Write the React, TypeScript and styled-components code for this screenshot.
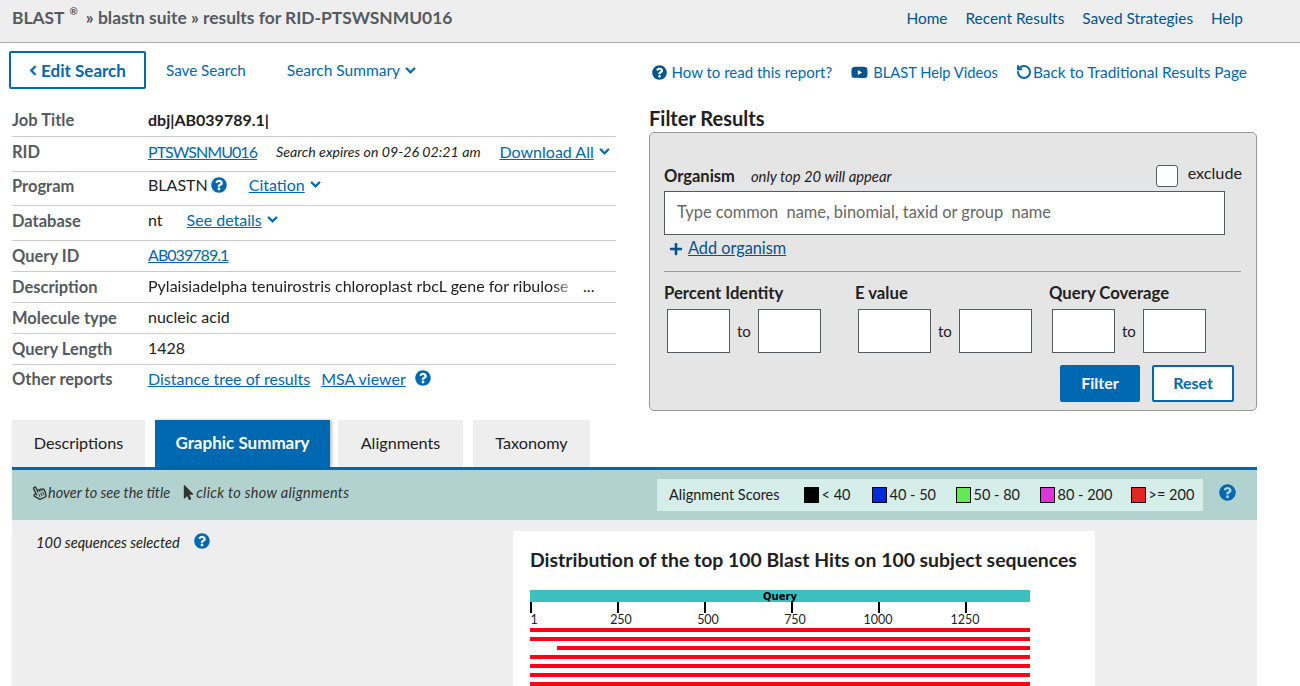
import { FunctionComponent, ReactNode } from "react";
import styled, { createGlobalStyle } from "styled-components";
import {
  FaChevronDown,
  FaChevronLeft,
  FaMousePointer,
  FaPlus,
  FaQuestionCircle,
  FaRegHandPointer,
  FaYoutube,
} from "react-icons/fa";
import { RotateCcw } from "lucide-react";

const BLUE = "#0067b1";
const DARK_BLUE = "#00548f";

const GlobalStyle = createGlobalStyle`
  html, body {
    margin: 0;
    padding: 0;
    background: #fff;
    color: #212121;
    font-family: "Lato", "Open Sans", sans-serif;
    font-size: 16px;
  }
  * { box-sizing: border-box; }
`;

const Page = styled.div`
  width: 1300px;
  height: 686px;
  overflow: hidden;
`;

const TopBar = styled.header`
  height: 43px;
  background: #eee;
  border-bottom: 1px solid #aaa;
  display: flex;
  align-items: center;
  justify-content: space-between;
  padding: 0 57px 7px 12px;
`;

const Crumbs = styled.div`
  font-size: 17.4px;
  font-weight: 700;
  color: #555a60;
  sup {
    font-size: 10px;
    margin: 0 8px 0 5px;
    position: relative;
    top: -2px;
    vertical-align: super;
    line-height: 0;
  }
`;

const TopNav = styled.nav`
  display: flex;
  gap: 18px;
  a {
    color: ${DARK_BLUE};
    font-size: 15.4px;
  }
`;

const ActionRow = styled.div`
  display: flex;
  align-items: center;
  justify-content: space-between;
  padding: 8px 53px 0 9px;
  height: 46px;
`;

const ActionGroup = styled.div`
  display: flex;
  align-items: center;
`;

const HelpActions = styled(ActionGroup)`
  margin-top: 4px;
`;

const EditButton = styled.a`
  width: 137px;
  height: 38px;
  border: 2px solid ${BLUE};
  border-radius: 2px;
  color: ${BLUE};
  font-weight: 700;
  font-size: 17px;
  display: flex;
  align-items: center;
  justify-content: center;
  gap: 4px;
  svg {
    width: 8px;
    height: 11px;
    stroke: currentColor;
    stroke-width: 30px;
  }
`;

const ActionLink = styled.a<{ $left: number; $size?: number; $gap?: number }>`
  color: ${BLUE};
  font-size: ${(p) => p.$size ?? 15}px;
  margin-left: ${(p) => p.$left}px;
  display: inline-flex;
  align-items: center;
  gap: ${(p) => p.$gap ?? 5}px;
  white-space: nowrap;
  svg {
    flex: none;
  }
`;

const Chevron = styled(FaChevronDown)`
  width: 11px;
  height: 11px;
  color: ${BLUE};
  margin-left: 5px;
  flex: none;
  stroke: currentColor;
  stroke-width: 30px;
`;

const Columns = styled.div`
  display: flex;
  padding-left: 12px;
`;

const Summary = styled.div`
  width: 604px;
  margin-top: 15px;
`;

const Row = styled.div<{ $height: number; $lift: number }>`
  height: ${(p) => p.$height}px;
  padding-bottom: ${(p) => p.$lift}px;
  display: grid;
  grid-template-columns: 136px 1fr;
  align-items: center;
  border-bottom: 1px solid #ccc;
  &:last-child {
    border-bottom: none;
  }
`;

const RowLabel = styled.div`
  font-weight: 700;
  color: #555a60;
  font-size: 16.5px;
  white-space: nowrap;
`;

const RowValue = styled.div<{ $bold?: boolean }>`
  display: flex;
  align-items: center;
  margin-top: -2px;
  font-size: 16px;
  white-space: nowrap;
  font-weight: ${(p) => (p.$bold ? 700 : 400)};
`;

const TextLink = styled.a<{ $left?: number }>`
  color: ${BLUE};
  text-decoration: underline;
  margin-left: ${(p) => p.$left ?? 0}px;
`;

const CodeLink = styled(TextLink)`
  letter-spacing: -0.95px;
`;

const Expires = styled.span`
  font-style: italic;
  font-size: 14.2px;
  margin-left: 19px;
`;

const Help = styled(FaQuestionCircle)<{ $left?: number }>`
  width: 16px;
  height: 16px;
  color: ${BLUE};
  margin-left: ${(p) => p.$left ?? 0}px;
  flex: none;
`;

const Faded = styled.span`
  display: inline-block;
  width: 431px;
  overflow: hidden;
  -webkit-mask-image: linear-gradient(to right, #000 94%, transparent 100%);
  mask-image: linear-gradient(to right, #000 94%, transparent 100%);
`;

const FilterColumn = styled.div`
  width: 608px;
  margin-left: 33px;
`;

const FilterTitle = styled.h2`
  margin: 17px 0 2px;
  font-size: 20px;
  line-height: 24px;
  font-weight: 700;
`;

const FilterPanel = styled.div`
  height: 279px;
  background: #e5e5e5;
  border: 1px solid #999;
  border-radius: 5px;
  padding: 28px 14px 0;
`;

const OrganismHead = styled.div`
  display: flex;
  align-items: center;
  height: 30px;
  b {
    font-weight: 700;
    font-size: 16.5px;
  }
  em {
    margin: -1px 0 0 16px;
    font-size: 14.8px;
  }
`;

const Checkbox = styled.span`
  width: 22px;
  height: 22px;
  margin: 0 10px 0 auto;
  background: #fff;
  border: 1px solid #555a60;
  border-radius: 3px;
`;

const ExcludeLabel = styled.span`
  font-size: 16.2px;
  margin-top: -8px;
`;

const OrganismInput = styled.div`
  width: 561px;
  height: 44px;
  background: #fff;
  border: 1px solid #555a60;
  padding: 0 0 3px 12px;
  display: flex;
  align-items: center;
  color: #666;
  font-size: 16.4px;
  white-space: pre;
`;

const AddOrganism = styled.div`
  display: flex;
  align-items: center;
  gap: 5px;
  height: 27px;
  margin: 0 0 9px 5px;
  color: ${DARK_BLUE};
  a {
    text-decoration: underline;
    font-size: 16.3px;
    margin-top: -2px;
  }
  svg {
    width: 14px;
    height: 14px;
  }
`;

const Divider = styled.hr`
  margin: 0;
  border: none;
  border-top: 1px solid #999;
  width: 577px;
`;

const RangeGroups = styled.div`
  display: flex;
  margin-top: 11px;
`;

const RangeGroup = styled.div<{ $width: number }>`
  width: ${(p) => p.$width}px;
  font-weight: 700;
  font-size: 16.7px;
  line-height: 20px;
  white-space: nowrap;
`;

const RangeInputs = styled.div`
  display: flex;
  align-items: center;
  gap: 7px;
  margin: 6px 0 0 3px;
  font-weight: 400;
  font-size: 15px;
`;

const RangeBox = styled.span<{ $width: number }>`
  width: ${(p) => p.$width}px;
  height: 44px;
  background: #fff;
  border: 1px solid #555a60;
`;

const ButtonRow = styled.div`
  display: flex;
  justify-content: flex-end;
  gap: 12px;
  margin: 12px 8px 0 0;
`;

const PanelButton = styled.a<{ $primary?: boolean }>`
  height: 37px;
  width: ${(p) => (p.$primary ? 80 : 82)}px;
  display: flex;
  align-items: center;
  justify-content: center;
  border: 2px solid ${BLUE};
  border-radius: 2px;
  padding-bottom: 2px;
  font-weight: 700;
  font-size: 16px;
  background: ${(p) => (p.$primary ? BLUE : "#fff")};
  color: ${(p) => (p.$primary ? "#fff" : BLUE)};
`;

const Tabs = styled.div`
  display: flex;
  margin: 9px 43px 0 12px;
  height: 50px;
  border-bottom: 3px solid ${BLUE};
`;

const Tab = styled.a<{ $width: number; $gap: number; $active?: boolean }>`
  width: ${(p) => p.$width}px;
  margin-right: ${(p) => p.$gap}px;
  padding-bottom: 2px;
  display: flex;
  align-items: center;
  justify-content: center;
  font-size: ${(p) => (p.$active ? 17 : 16.2)}px;
  background: ${(p) => (p.$active ? BLUE : "#eee")};
  color: ${(p) => (p.$active ? "#fff" : "#212121")};
  font-weight: ${(p) => (p.$active ? 700 : 400)};
  box-shadow: ${(p) => (p.$active ? "2px 0 3px rgba(0,0,0,.25)" : "none")};
`;

const TipBar = styled.div`
  margin: 0 43px 0 12px;
  height: 50px;
  background: #b1d2cf;
  display: flex;
  align-items: center;
  padding: 0 0 0 20px;
  font-size: 14.5px;
  font-style: italic;
  color: #333;
`;

const Tip = styled.span<{ $left?: number; $spread?: number }>`
  display: inline-flex;
  align-items: center;
  gap: 2px;
  margin: -5px 0 0 ${(p) => p.$left ?? 0}px;
  letter-spacing: ${(p) => p.$spread ?? 0}px;
  white-space: nowrap;
`;

const HandIcon = styled(FaRegHandPointer)`
  width: 14px;
  height: 15px;
  transform: rotate(-25deg);
`;

const PointerIcon = styled(FaMousePointer)`
  width: 11px;
  height: 15px;
`;

const Legend = styled.div`
  margin-left: auto;
  width: 546px;
  height: 32px;
  background: #d5eee9;
  display: flex;
  align-items: center;
  padding: 0 0 1px 12px;
  font-style: normal;
  font-size: 14.5px;
  color: #212121;
  white-space: nowrap;
`;

const LegendItem = styled.span<{ $width: number; $left?: number }>`
  width: ${(p) => p.$width}px;
  display: flex;
  align-items: center;
  gap: 3px;
  margin-left: ${(p) => p.$left ?? 0}px;
  white-space: nowrap;
`;

const Swatch = styled.i<{ $color: string }>`
  width: 15px;
  height: 16px;
  border: 1px solid #000;
  background: ${(p) => p.$color};
  flex: none;
`;

const TipHelp = styled(Help)`
  width: 17px;
  height: 17px;
  margin: -5px 21px 0 16px;
`;

const Body = styled.div`
  margin: 0 43px 0 12px;
  height: 166px;
  background: #eee;
  display: flex;
  padding: 12px 0 0 24px;
`;

const Selected = styled.div`
  width: 477px;
  display: flex;
  align-items: flex-start;
  font-style: italic;
  font-size: 14.6px;
  line-height: 22px;
  svg {
    margin-top: 1px;
  }
`;

const ChartCard = styled.div`
  width: 582px;
  margin-top: -1px;
  background: #fff;
  padding: 16px 17px;
`;

const ChartTitle = styled.h3`
  margin: 0 0 18px;
  font-size: 19.4px;
  line-height: 25px;
  font-weight: 700;
  white-space: nowrap;
`;

const QueryBar = styled.div`
  width: 500px;
  height: 12px;
  background: #3dbfbf;
  color: #000;
  text-align: center;
  font-family: "DejaVu Sans", sans-serif;
  font-weight: 700;
  font-size: 10px;
  line-height: 13px;
`;

const Scale = styled.div`
  width: 500px;
  height: 26px;
  display: flex;
`;

const Tick = styled.div`
  width: 87px;
  flex: none;
  border-left: 2px solid #000;
  height: 10px;
  font-size: 12.5px;
  line-height: 14px;
  padding: 11px 0 0 2px;
  color: #222;
  white-space: nowrap;
`;

const TickLabel = styled.span<{ $nudge: number }>`
  display: inline-block;
  margin-left: ${(p) => p.$nudge}px;
  transform: translateX(-50%);
`;

const Hits = styled.div`
  width: 500px;
  display: flex;
  flex-direction: column;
  gap: 5px;
`;

const Hit = styled.div<{ $indent: number }>`
  height: 4px;
  background: #ff0018;
  margin-left: ${(p) => p.$indent}px;
`;

const infoRows: { label: string; height: number; lift: number; value: ReactNode; bold?: boolean }[] = [
  { label: "Job Title", height: 33, lift: 0, value: "dbj|AB039789.1|", bold: true },
  {
    label: "RID",
    height: 35,
    lift: 4,
    value: (
      <>
        <CodeLink>PTSWSNMU016</CodeLink>
        <Expires>Search expires on 09-26 02:21 am</Expires>
        <TextLink $left={19}>Download All</TextLink>
        <Chevron />
      </>
    ),
  },
  {
    label: "Program",
    height: 34,
    lift: 6,
    value: (
      <>
        BLASTN
        <Help $left={3} />
        <TextLink $left={22}>Citation</TextLink>
        <Chevron />
      </>
    ),
  },
  {
    label: "Database",
    height: 35,
    lift: 5,
    value: (
      <>
        nt
        <TextLink $left={24}>See details</TextLink>
        <Chevron />
      </>
    ),
  },
  { label: "Query ID", height: 31, lift: 1, value: <CodeLink>AB039789.1</CodeLink> },
  {
    label: "Description",
    height: 31,
    lift: 1,
    value: (
      <>
        <Faded>Pylaisiadelpha tenuirostris chloroplast rbcL gene for ribulose</Faded>
        <span>&nbsp;...</span>
      </>
    ),
  },
  { label: "Molecule type", height: 31, lift: 1, value: "nucleic acid" },
  { label: "Query Length", height: 31, lift: 1, value: "1428" },
  {
    label: "Other reports",
    height: 30,
    lift: 2,
    value: (
      <>
        <TextLink>Distance tree of results</TextLink>
        <TextLink $left={11}>MSA viewer</TextLink>
        <Help $left={9} />
      </>
    ),
  },
];

const ranges = [
  { label: "Percent Identity", groupWidth: 191, boxWidth: 63 },
  { label: "E value", groupWidth: 194, boxWidth: 73 },
  { label: "Query Coverage", groupWidth: 190, boxWidth: 63 },
];

const tabs = [
  { label: "Descriptions", width: 133, gap: 10 },
  { label: "Graphic Summary", width: 175, gap: 8, active: true },
  { label: "Alignments", width: 125, gap: 10 },
  { label: "Taxonomy", width: 117, gap: 0 },
];

const scores = [
  { label: "< 40", color: "#000000", width: 68, left: 24 },
  { label: "40 - 50", color: "#0029d9", width: 84 },
  { label: "50 - 80", color: "#66e854", width: 84 },
  { label: "80 - 200", color: "#dc35dc", width: 91 },
  { label: ">= 200", color: "#e22626", width: 70 },
];

const ticks = ["1", "250", "500", "750", "1000", "1250"];
const hitIndents = [0, 0, 27, 0, 0, 0, 0];

const App: FunctionComponent = () => {
  return (
    <Page>
      <GlobalStyle />
      <TopBar>
        <Crumbs>
          BLAST<sup>®</sup>» blastn suite » results for RID-PTSWSNMU016
        </Crumbs>
        <TopNav>
          <a>Home</a>
          <a>Recent Results</a>
          <a>Saved Strategies</a>
          <a>Help</a>
        </TopNav>
      </TopBar>
      <ActionRow>
        <ActionGroup>
          <EditButton>
            <FaChevronLeft />
            Edit Search
          </EditButton>
          <ActionLink $left={20} $size={15.2}>
            Save Search
          </ActionLink>
          <ActionLink $left={41} $size={15.5} $gap={0}>
            Search Summary
            <Chevron />
          </ActionLink>
        </ActionGroup>
        <HelpActions>
          <ActionLink $left={0}>
            <FaQuestionCircle size={15} color={DARK_BLUE} />
            How to read this report?
          </ActionLink>
          <ActionLink $left={19} $size={14.7}>
            <FaYoutube size={17} color={DARK_BLUE} />
            BLAST Help Videos
          </ActionLink>
          <ActionLink $left={18} $size={15.4} $gap={1}>
            <RotateCcw size={16} strokeWidth={3} />
            Back to Traditional Results Page
          </ActionLink>
        </HelpActions>
      </ActionRow>
      <Columns>
        <Summary>
          {infoRows.map((row) => (
            <Row $height={row.height} $lift={row.lift} key={row.label}>
              <RowLabel>{row.label}</RowLabel>
              <RowValue $bold={row.bold}>{row.value}</RowValue>
            </Row>
          ))}
        </Summary>
        <FilterColumn>
          <FilterTitle>Filter Results</FilterTitle>
          <FilterPanel>
            <OrganismHead>
              <b>Organism</b>
              <em>only top 20 will appear</em>
              <Checkbox />
              <ExcludeLabel>exclude</ExcludeLabel>
            </OrganismHead>
            <OrganismInput>Type common  name, binomial, taxid or group  name</OrganismInput>
            <AddOrganism>
              <FaPlus />
              <a>Add organism</a>
            </AddOrganism>
            <Divider />
            <RangeGroups>
              {ranges.map((range) => (
                <RangeGroup $width={range.groupWidth} key={range.label}>
                  {range.label}
                  <RangeInputs>
                    <RangeBox $width={range.boxWidth} />
                    to
                    <RangeBox $width={range.boxWidth} />
                  </RangeInputs>
                </RangeGroup>
              ))}
            </RangeGroups>
            <ButtonRow>
              <PanelButton $primary>Filter</PanelButton>
              <PanelButton>Reset</PanelButton>
            </ButtonRow>
          </FilterPanel>
        </FilterColumn>
      </Columns>
      <Tabs>
        {tabs.map((tab) => (
          <Tab $width={tab.width} $gap={tab.gap} $active={tab.active} key={tab.label}>
            {tab.label}
          </Tab>
        ))}
      </Tabs>
      <TipBar>
        <Tip>
          <HandIcon />
          hover to see the title
        </Tip>
        <Tip $left={13} $spread={0.3}>
          <PointerIcon />
          click to show alignments
        </Tip>
        <Legend>
          Alignment Scores
          {scores.map((score) => (
            <LegendItem $width={score.width} $left={score.left} key={score.label}>
              <Swatch $color={score.color} />
              {score.label}
            </LegendItem>
          ))}
        </Legend>
        <TipHelp />
      </TipBar>
      <Body>
        <Selected>
          100 sequences selected
          <Help $left={14} />
        </Selected>
        <ChartCard>
          <ChartTitle>Distribution of the top 100 Blast Hits on 100 subject sequences</ChartTitle>
          <QueryBar>Query</QueryBar>
          <Scale>
            {ticks.map((tick) => (
              <Tick key={tick}>
                <TickLabel $nudge={tick.length > 3 ? -4 : 0}>{tick}</TickLabel>
              </Tick>
            ))}
          </Scale>
          <Hits>
            {hitIndents.map((indent, i) => (
              <Hit $indent={indent} key={i} />
            ))}
          </Hits>
        </ChartCard>
      </Body>
    </Page>
  );
};

export default App;
